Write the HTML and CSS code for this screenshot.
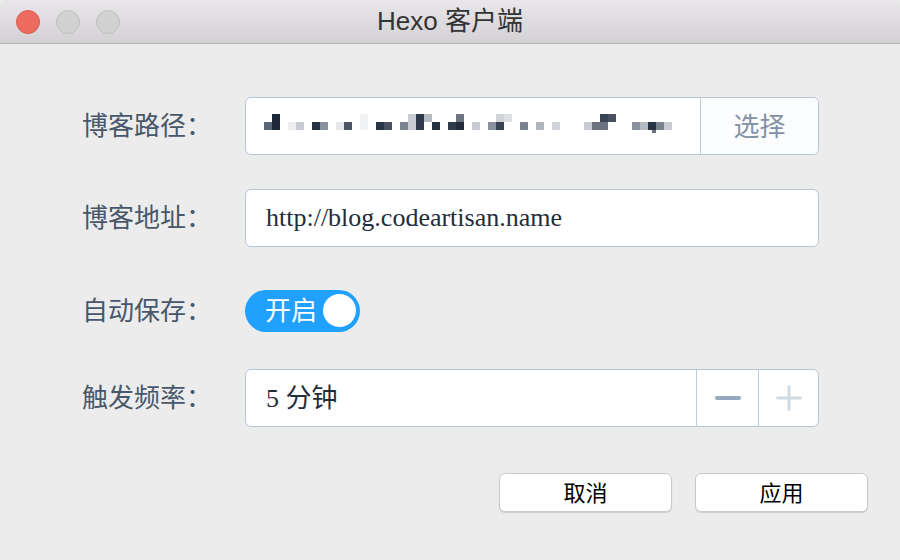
FILE: index.html
```html
<!DOCTYPE html>
<html lang="zh-CN">
<head>
<meta charset="utf-8">
<title>Hexo 客户端</title>
<link rel="stylesheet" href="styles.css">
</head>
<body>
<div class="window">
  <div class="titlebar">
    <div class="lights">
      <span class="light red"></span>
      <span class="light"></span>
      <span class="light"></span>
    </div>
    <div class="title">Hexo 客户端</div>
    <div></div>
  </div>
  <div class="content">
    <div class="form">
      <div class="row">
        <div class="label">博客路径：</div>
        <div class="input">
          <div class="field path">
            <svg class="mosaic" width="412" height="20" viewBox="0 0 412 20">
              <rect x="0" y="8" width="8" height="8" fill="#5d6675"/>
              <rect x="8" y="0" width="8" height="16" fill="#1e2837"/>
              <rect x="24" y="8" width="8" height="8" fill="#eceef0"/>
              <rect x="32" y="8" width="8" height="8" fill="#c8ccd2"/>
              <rect x="48" y="8" width="8" height="8" fill="#283244"/>
              <rect x="56" y="8" width="8" height="8" fill="#8a919b"/>
              <rect x="72" y="8" width="8" height="8" fill="#e4e6e9"/>
              <rect x="80" y="8" width="8" height="8" fill="#4d5564"/>
              <rect x="96" y="0" width="8" height="16" fill="#f1f2f4"/>
              <rect x="112" y="8" width="8" height="8" fill="#2c3546"/>
              <rect x="120" y="8" width="8" height="8" fill="#4a5262"/>
              <rect x="136" y="8" width="8" height="8" fill="#7b828d"/>
              <rect x="144" y="0" width="8" height="16" fill="#c9cdd3"/>
              <rect x="152" y="0" width="8" height="16" fill="#2f3949"/>
              <rect x="160" y="0" width="8" height="8" fill="#b5b9c0"/>
              <rect x="168" y="8" width="8" height="8" fill="#252f3f"/>
              <rect x="184" y="8" width="8" height="8" fill="#303a4a"/>
              <rect x="192" y="0" width="8" height="8" fill="#6e7582"/>
              <rect x="192" y="8" width="8" height="8" fill="#222c3b"/>
              <rect x="208" y="8" width="8" height="8" fill="#c8ccd2"/>
              <rect x="224" y="8" width="8" height="8" fill="#8a919b"/>
              <rect x="232" y="0" width="8" height="8" fill="#d0d3d8"/>
              <rect x="232" y="8" width="8" height="8" fill="#3a4352"/>
              <rect x="240" y="0" width="8" height="8" fill="#dde0e3"/>
              <rect x="256" y="8" width="8" height="8" fill="#7a818c"/>
              <rect x="272" y="8" width="8" height="8" fill="#b0b5bc"/>
              <rect x="288" y="8" width="8" height="8" fill="#d0d3d8"/>
              <rect x="320" y="8" width="8" height="8" fill="#c8ccd2"/>
              <rect x="328" y="8" width="8" height="8" fill="#6a7280"/>
              <rect x="336" y="0" width="8" height="8" fill="#3a4352"/>
              <rect x="336" y="8" width="8" height="8" fill="#6a7280"/>
              <rect x="344" y="0" width="8" height="8" fill="#4a5262"/>
              <rect x="368" y="8" width="8" height="8" fill="#8a919b"/>
              <rect x="376" y="8" width="8" height="8" fill="#b5b9c0"/>
              <rect x="384" y="8" width="8" height="8" fill="#2a3343"/>
              <rect x="388" y="16" width="4" height="3" fill="#6a7280"/>
              <rect x="392" y="8" width="8" height="8" fill="#7a818c"/>
              <rect x="400" y="8" width="8" height="8" fill="#c8ccd2"/>
            </svg>
          </div>
          <div class="append">选择</div>
        </div>
      </div>
      <div class="row">
        <div class="label">博客地址：</div>
        <div class="input">
          <div class="field">http://blog.codeartisan.name</div>
        </div>
      </div>
      <div class="row switch-row">
        <div class="label">自动保存：</div>
        <div class="switch">
          <span class="switch-text">开启</span>
          <span class="knob"></span>
        </div>
      </div>
      <div class="row">
        <div class="label">触发频率：</div>
        <div class="input">
          <div class="field cjk-field">5 分钟</div>
          <div class="step minus">
            <svg width="26" height="4" viewBox="0 0 26 4"><rect x="0" y="0" width="26" height="4" rx="2" fill="#97a8be"/></svg>
          </div>
          <div class="step plus">
            <svg width="26" height="26" viewBox="0 0 26 26"><rect x="0" y="11.5" width="26" height="3" rx="1.5" fill="#d1dbe5"/><rect x="11.5" y="0" width="3" height="26" rx="1.5" fill="#d1dbe5"/></svg>
          </div>
        </div>
      </div>
    </div>
    <div class="actions">
      <button class="btn">取消</button>
      <button class="btn">应用</button>
    </div>
  </div>
</div>
</body>
</html>
```

FILE: styles.css
```css
html, body {
  margin: 0;
  padding: 0;
}
body {
  width: 900px;
  height: 560px;
  overflow: hidden;
  background: #ececec;
}
.window {
  width: 900px;
  height: 560px;
  background: #ececec;
}
.titlebar {
  height: 43px;
  border-bottom: 1px solid #b3b3b3;
  background: linear-gradient(#e9e7e9, #d3d1d3);
  display: grid;
  grid-template-columns: 1fr auto 1fr;
  align-items: center;
  border-radius: 6px 6px 0 0;
}
.lights {
  display: flex;
  gap: 16px;
  padding-left: 16px;
}
.light {
  width: 24px;
  height: 24px;
  border-radius: 50%;
  box-sizing: border-box;
  background: #d2d2d2;
  border: 1px solid #bfbfbf;
}
.light.red {
  background: #ee6b60;
  border-color: #dc5a4f;
}
.title {
  font-family: "Liberation Sans", "Noto Sans CJK SC", sans-serif;
  font-size: 26px;
  color: #333333;
  line-height: 43px;
}
.content {
  padding: 53px 32px 0 82px;
}
.form {
  display: flex;
  flex-direction: column;
  gap: 34px;
  padding-right: 49px;
}
.row {
  display: flex;
  align-items: center;
  height: 58px;
}
.row.switch-row {
  height: 54px;
  padding-top: 5px;
  box-sizing: border-box;
}
.label {
  width: 163px;
  flex: none;
  font-family: "Noto Sans CJK SC", sans-serif;
  font-size: 26px;
  line-height: 1;
  color: #48576a;
  padding-bottom: 4px;
}
.input {
  flex: 1;
  height: 58px;
  box-sizing: border-box;
  border: 1px solid #b9c5d4;
  border-radius: 6px;
  background: #ffffff;
  display: flex;
  overflow: hidden;
}
.field {
  flex: 1;
  display: flex;
  align-items: center;
  padding: 0 20px;
  font-family: "Liberation Serif", "Noto Sans CJK SC", serif;
  font-size: 26px;
  color: #1f2d3d;
  white-space: nowrap;
}
.field.cjk-field {
  padding-bottom: 5px;
}
.field.path {
  padding-left: 18px;
}
.mosaic {
  display: block;
  margin-top: -4px;
}
.append {
  width: 117px;
  flex: none;
  border-left: 1px solid #bfcbd9;
  background: #fbfdff;
  color: #8391a5;
  font-family: "Noto Sans CJK SC", sans-serif;
  font-size: 26px;
  display: flex;
  align-items: center;
  justify-content: center;
  padding-bottom: 4px;
}
.step {
  flex: none;
  border-left: 1px solid #bfcbd9;
  display: flex;
  align-items: center;
  justify-content: center;
}
.step svg {
  display: block;
}
.step.minus {
  width: 61px;
}
.step.plus {
  width: 59px;
}
.switch {
  width: 115px;
  height: 42px;
  border-radius: 21px;
  background: #20a0ff;
  display: flex;
  align-items: center;
  padding-left: 20px;
  padding-right: 4px;
  box-sizing: border-box;
}
.switch-text {
  font-family: "Noto Sans CJK SC", sans-serif;
  font-size: 26px;
  line-height: 1;
  color: #ffffff;
  padding-bottom: 3px;
}
.knob {
  margin-left: auto;
  width: 33px;
  height: 33px;
  border-radius: 50%;
  background: #ffffff;
}
.actions {
  margin-top: 46px;
  display: flex;
  justify-content: flex-end;
  gap: 23px;
}
.btn {
  width: 173px;
  height: 39px;
  box-sizing: border-box;
  background: #ffffff;
  border: 1px solid #cacaca;
  border-radius: 6px;
  box-shadow: 0 1px 1px rgba(0, 0, 0, 0.12);
  font-family: "Noto Sans CJK SC", sans-serif;
  font-size: 22px;
  line-height: 1;
  color: #000000;
  padding: 0 0 4px 0;
}
```
